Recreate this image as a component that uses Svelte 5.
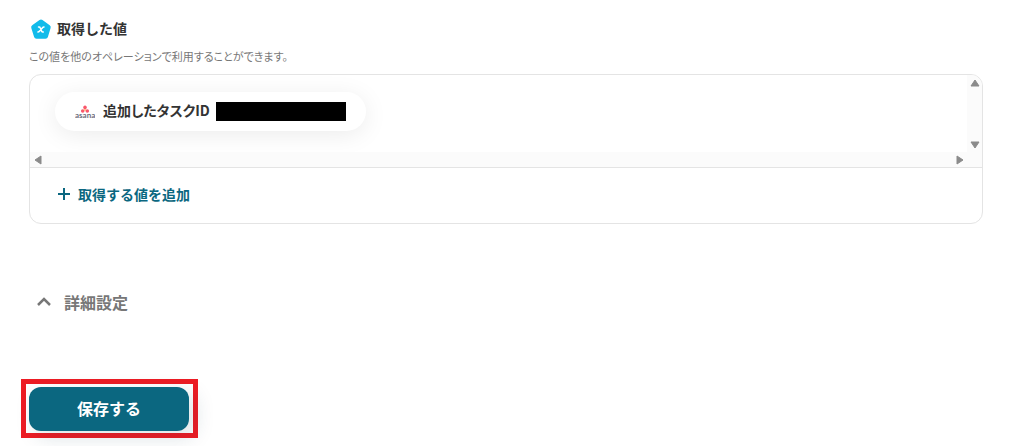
<script>
    let values = [{ id: 1, label: "追加したタスクID" }];
    let open = false;
    let list;

    function scroll(x, y) {
        list.scrollBy({ left: x, top: y });
    }
</script>

<main>
    <header>
        <svg class="badge" viewBox="0 0 23 23" aria-hidden="true">
            <path
                d="M10.5 2.1a2.5 2.5 0 0 1 3 0l7.2 5.2a2.5 2.5 0 0 1 .9 2.8l-2.7 8.9a2.5 2.5 0 0 1-2.4 1.8H7.500a2.5 2.5 0 0 1-2.4-1.8L2.300 10.100a2.5 2.5 0 0 1 .9-2.8z"
                fill="#12bbea"
            />
            <path
                d="M9.5 9h.6c.7 0 1 .3 1.2.9l1.3 3.3c.3.6.6.9 1.2.9h.5M15 9c-.8 0-1.2.3-1.7.9l-2.7 3.2c-.5.6-.9.9-1.700.9"
                fill="none"
                stroke="#fff"
                stroke-width="1.5"
                stroke-linecap="round"
            />
        </svg>
        <h2>取得した値</h2>
    </header>
    <p>この値を他のオペレーションで利用することができます。</p>

    <section class="card">
        <div class="scroller">
            <div class="list" bind:this={list}>
                {#each values as value (value.id)}
                    <div class="chip">
                        <svg class="asana" viewBox="0 0 20 14" aria-hidden="true">
                            <circle cx="10" cy="2.4" r="1.8" fill="#f9576b" />
                            <circle cx="7.7" cy="6" r="1.8" fill="#f9576b" />
                            <circle cx="12.3" cy="6" r="1.8" fill="#f9576b" />
                            <circle cx="10" cy="4.9" r="0.9" fill="#ffb25c" />
                            <text x="0" y="13">asana</text>
                        </svg>
                        <span>{value.label}</span>
                        <span class="mask"></span>
                    </div>
                {/each}
            </div>
            <div class="bar vertical">
                <button aria-label="上へ" on:click={() => scroll(0, -40)}>
                    <svg viewBox="0 0 10 8"><path d="M5 1l4 6H1z" /></svg>
                </button>
                <button aria-label="下へ" on:click={() => scroll(0, 40)}>
                    <svg viewBox="0 0 10 8"><path d="M5 7L1 1h8z" /></svg>
                </button>
            </div>
            <div class="bar horizontal">
                <button aria-label="左へ" on:click={() => scroll(-40, 0)}>
                    <svg class="side" viewBox="0 0 8 10"><path d="M1 5l6-4v8z" /></svg>
                </button>
                <button aria-label="右へ" on:click={() => scroll(40, 0)}>
                    <svg class="side" viewBox="0 0 8 10"><path d="M7 5L1 9V1z" /></svg>
                </button>
            </div>
            <div class="corner"></div>
        </div>
        <div class="footer">
            <button class="add">
                <svg viewBox="0 0 14 14" aria-hidden="true">
                    <path d="M7 1v12M1 7h12" />
                </svg>
                取得する値を追加
            </button>
        </div>
    </section>

    <button class="detail" aria-expanded={open} on:click={() => (open = !open)}>
        <svg viewBox="0 0 14 10" aria-hidden="true"><path d="M1 8l6-6 6 6" /></svg>
        詳細設定
    </button>

    <div class="highlight">
        <button class="save">保存する</button>
    </div>
</main>

<style>
    :global(body) {
        background: #fff;
    }

    main {
        padding: 18px 35px 8px 29px;
        font-family: "Noto Sans CJK JP", sans-serif;
        color: #333;
    }

    button {
        padding: 0;
        border: none;
        background: transparent;
        font-family: inherit;
        cursor: pointer;
    }

    header {
        display: flex;
        align-items: center;
        gap: 5px;
        height: 22px;
    }

    .badge {
        width: 23px;
        height: 23px;
    }

    h2 {
        margin: 0;
        padding-bottom: 2px;
        font-size: 14px;
        line-height: 20px;
        font-weight: 700;
    }

    p {
        margin: 7px 0 9px;
        font-size: 11px;
        line-height: 18px;
        font-feature-settings: "palt";
        color: #777;
    }

    .card {
        border: 1px solid #e4e4e4;
        border-radius: 12px;
        overflow: hidden;
    }

    .scroller {
        display: grid;
        grid-template-columns: 1fr 15px;
        grid-template-rows: 77px 15px;
        border-bottom: 1px solid #e4e4e4;
    }

    .list {
        padding: 17px 25px;
        overflow: hidden;
    }

    .chip {
        display: inline-flex;
        align-items: center;
        height: 39px;
        padding: 0 20px;
        border-radius: 20px;
        background: #fff;
        box-shadow: 0 4px 24px rgba(0, 0, 0, 0.08);
        font-size: 14px;
        line-height: 20px;
        font-weight: 700;
        font-feature-settings: "palt";
        white-space: nowrap;
    }

    .chip span {
        padding-bottom: 3px;
    }

    .asana {
        width: 20px;
        height: 14px;
        margin-right: 8px;
    }

    .asana text {
        font-family: "Lato", sans-serif;
        font-size: 8px;
        font-weight: 700;
        fill: #6d6e7c;
    }

    .chip .mask {
        width: 130px;
        height: 19px;
        margin-left: 6px;
        padding: 0;
        background: #000;
    }

    .bar {
        display: flex;
        justify-content: space-between;
        align-items: center;
        background: #fbfbfb;
    }

    .bar button {
        display: flex;
        align-items: center;
        justify-content: center;
        width: 15px;
        height: 15px;
    }

    .bar svg {
        width: 10px;
        height: 8px;
    }

    .bar .side {
        width: 8px;
        height: 10px;
    }

    .bar path {
        fill: #8b8b8b;
        stroke: #8b8b8b;
        stroke-linejoin: round;
    }

    .vertical {
        flex-direction: column;
    }

    .horizontal {
        grid-row: 2;
    }

    .corner {
        background: #fbfbfb;
    }

    .footer {
        padding: 14px 27px 17px;
    }

    .add {
        display: flex;
        align-items: center;
        gap: 7px;
        font-size: 14px;
        line-height: 24px;
        font-weight: 700;
        color: #0b6780;
    }

    .add svg {
        width: 14px;
        height: 14px;
    }

    .add path {
        fill: none;
        stroke: #0b6780;
        stroke-width: 2;
    }

    .detail {
        display: flex;
        align-items: center;
        gap: 13px;
        margin: 66px 0 65px 8px;
        font-size: 16px;
        line-height: 24px;
        font-weight: 700;
        color: #777;
    }

    .detail svg {
        width: 14px;
        height: 10px;
    }

    .detail path {
        fill: none;
        stroke: #777;
        stroke-width: 2.5;
    }

    .highlight {
        display: inline-flex;
        margin-left: -8px;
        padding: 3px 4px 2px 3px;
        border: 5px solid #ed1c24;
    }

    .save {
        min-width: 160px;
        height: 44px;
        padding-bottom: 2px;
        border-radius: 12px;
        background: #0b6780;
        box-shadow: 6px 6px 20px rgba(11, 60, 80, 0.15);
        font-size: 16px;
        font-weight: 700;
        color: #fff;
    }
</style>
